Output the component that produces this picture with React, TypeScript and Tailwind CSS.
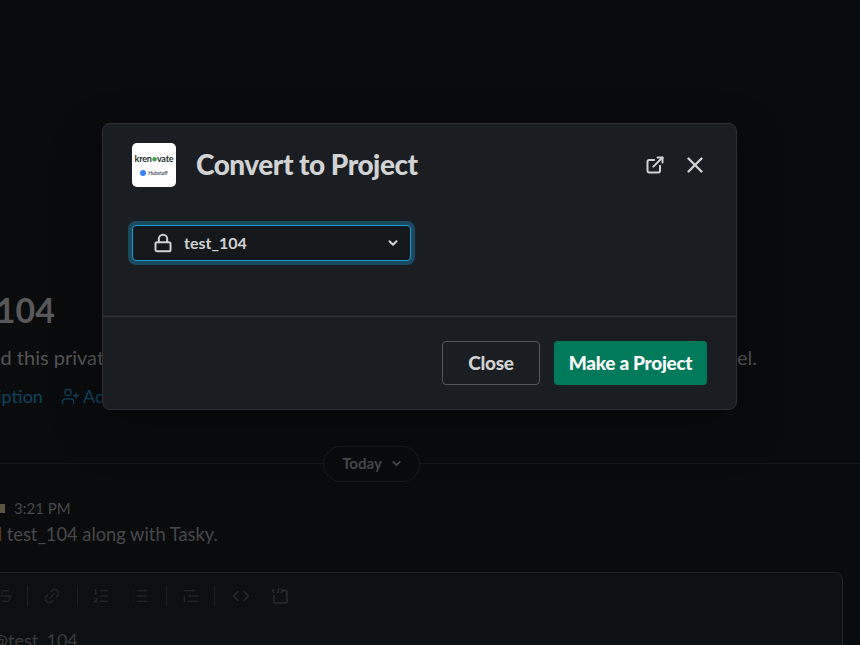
import React from 'react';
import {
  ChevronDown,
  Code,
  ExternalLink,
  Link2,
  List,
  ListOrdered,
  Lock,
  Strikethrough,
  TextQuote,
  UserPlus,
  X,
} from 'lucide-react';

const Divider = () => <span className="block w-px h-[22px] bg-[#1e1f22]" />;

const CodeBlockIcon = () => (
  <svg viewBox="0 0 18 18" fill="none" stroke="currentColor" strokeWidth="1.4" className="ml-[21px] w-[18px] h-[18px]">
    <path d="M11.5 3.5H15a1 1 0 0 1 1 1V15a1 1 0 0 1-1 1H4a1 1 0 0 1-1-1V8" />
    <path d="M3.5 2 1.5 4l2 2M6.5 6l1.5-5M10 2l2 2-2 2" />
  </svg>
);

const Composer = () => (
  <div className="ml-[-40px] mr-[17px] mt-[26px] h-[120px] rounded-lg border border-[#222427] bg-[#0e0f11]">
    <div className="flex items-center h-[46px] pl-[37px] text-[#2b2c2f]">
      <Strikethrough className="w-4 h-4" strokeWidth={1.5} />
      <span className="ml-[13px]"><Divider /></span>
      <Link2 className="ml-[15px] w-[18px] h-[18px] -rotate-45" strokeWidth={1.5} />
      <span className="ml-4"><Divider /></span>
      <ListOrdered className="ml-[14px] w-[18px] h-[18px]" strokeWidth={1.5} />
      <List className="ml-[21px] w-[18px] h-[18px]" strokeWidth={1.5} />
      <span className="ml-[17px]"><Divider /></span>
      <TextQuote className="ml-[15px] w-[18px] h-[18px]" strokeWidth={1.5} />
      <span className="ml-[14px]"><Divider /></span>
      <Code className="ml-[17px] w-[18px] h-[18px]" strokeWidth={1.5} />
      <CodeBlockIcon />
    </div>
    <p className="pl-[32px] mt-[9px] text-[18px] leading-6 text-[#3a3b3e]">@test_104</p>
  </div>
);

const Channel = () => (
  <div className="h-[645px] pt-[290px] overflow-hidden">
    <h1 className="ml-[-98px] text-[34px] leading-[40px] font-bold text-[#58585a] whitespace-nowrap">#test_104</h1>
    <div className="flex justify-end w-[757px] mt-[15px] text-[20px] leading-6 text-[#535457] whitespace-nowrap">
      <span>You created this private channel on April 27th. This is the very beginning of the test_104 channel.</span>
    </div>
    <div className="flex items-center ml-[-82px] mt-[15px] text-[18px] leading-6 text-[#0f4561] whitespace-nowrap">
      <span>Add description</span>
      <UserPlus className="ml-[18px] mr-[3px] w-[19px] h-[19px]" strokeWidth={1.5} />
      <span>Add people</span>
    </div>
    <div className="relative flex justify-center w-[742px] mt-[38px]">
      <div className="absolute left-0 top-[17px] w-[860px] h-px bg-[#17181a]" />
      <div className="relative flex items-center gap-[8px] w-[97px] justify-center h-[36px] pl-[3px] pb-[1px] rounded-full border border-[#1a1b1e] bg-[#0a0b0d] text-[15px] font-bold text-[#47484b]">
        Today
        <ChevronDown className="w-[13px] h-[13px]" strokeWidth={3.5} />
      </div>
    </div>
    <div className="flex items-center gap-[9px] ml-[-3px] mt-[16px] text-[15px] leading-5 text-[#47484b]">
      <span className="w-2 h-[9px] bg-[#5c5340]" />
      3:21 PM
    </div>
    <p className="ml-[-82px] mt-[4px] text-[18.3px] leading-6 text-[#47484b] whitespace-nowrap">
      <span className="text-[#5e4a1f]">You added</span> test_104 along with Tasky.
    </p>
    <Composer />
  </div>
);

const Logo = () => (
  <div className="flex flex-col items-center justify-center w-11 h-11 rounded-[5px] bg-white shrink-0">
    <span className="text-[9px] leading-[11px] font-bold text-[#25312b] tracking-[-0.2px]">
      kren<span className="text-[#3f9e4d]">●</span>vate
    </span>
    <span className="flex items-center gap-[2px] mt-[5px] text-[5px] leading-[8px] font-bold text-[#4b5563]">
      <span className="w-[6px] h-[6px] rounded-full bg-[#3b82f6]" />
      Hubstaff
    </span>
  </div>
);

const Modal = () => (
  <div className="absolute left-[102px] top-[123px] w-[635px] h-[287px] flex flex-col rounded-lg border border-[#2d2f33] bg-[#1a1d21] shadow-[0_18px_48px_rgba(0,0,0,0.35)]">
    <div className="flex items-center h-[192px] shrink-0 pl-[29px] pr-[29px] pt-[19px] pb-[5px] flex-col">
      <div className="flex items-center w-full">
        <Logo />
        <h2 className="ml-5 text-[28px] leading-[42px] mb-[2px] font-black tracking-[-0.5px] text-[#d1d2d3]">Convert to Project</h2>
        <div className="ml-auto flex items-center gap-[17px] mr-[-1px] text-[#d1d2d3]">
          <ExternalLink className="w-5 h-5" strokeWidth={2.4} />
          <X className="w-[26px] h-[26px]" strokeWidth={2.2} />
        </div>
      </div>
      <div className="self-start mt-[38px] flex items-center w-[279px] h-[36px] pl-[20px] pr-[12px] rounded-[4px] border border-[#1d9bd1] bg-[#15181b] shadow-[0_0_0_4px_rgba(29,155,209,0.36)] text-[#d1d2d3]">
        <Lock className="w-5 h-5" strokeWidth={2.4} />
        <span className="ml-[11px] text-[16px] font-bold">test_104</span>
        <ChevronDown className="ml-auto w-[14px] h-[14px] mr-[-2px]" strokeWidth={3.5} />
      </div>
    </div>
    <div className="flex items-center justify-end gap-[14px] flex-1 border-t border-[#35373b] pr-[29px]">
      <button className="w-[98px] h-[44px] rounded-[4px] border border-[#565759] text-[19px] font-black tracking-[-0.3px] text-[#d1d2d3]">Close</button>
      <button className="w-[153px] h-[44px] rounded-[4px] bg-[#007a5a] text-[19px] font-black tracking-[-0.3px] text-white">Make a Project</button>
    </div>
  </div>
);

export default function App() {
  return (
    <div className="relative w-[860px] h-[645px] overflow-hidden bg-[#0a0b0d] font-['Lato',sans-serif]">
      <Channel />
      <Modal />
    </div>
  );
}
